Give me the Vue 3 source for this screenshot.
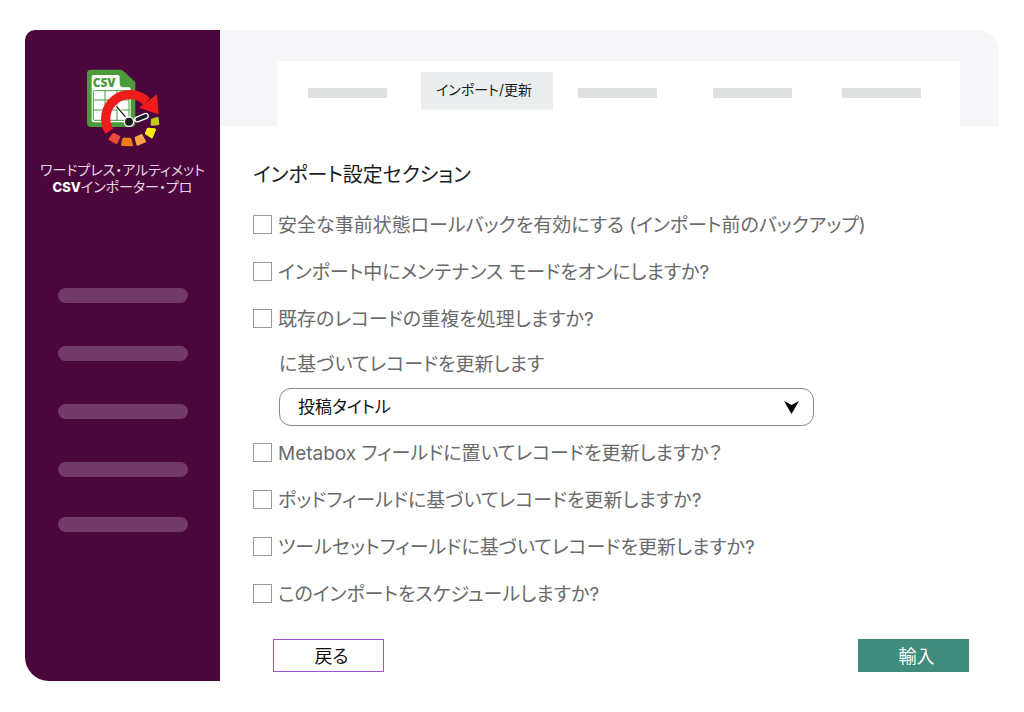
<script setup>
import { ref } from 'vue'

const before = ref([
  { id: 'rollback', label: '安全な事前状態ロールバックを有効にする (インポート前のバックアップ)', checked: false },
  { id: 'maintenance', label: 'インポート中にメンテナンス モードをオンにしますか?', checked: false },
  { id: 'duplicates', label: '既存のレコードの重複を処理しますか?', checked: false }
])

const after = ref([
  { id: 'metabox', label: 'Metabox フィールドに置いてレコードを更新しますか？', checked: false },
  { id: 'pods', label: 'ポッドフィールドに基づいてレコードを更新しますか?', checked: false },
  { id: 'toolset', label: 'ツールセットフィールドに基づいてレコードを更新しますか?', checked: false },
  { id: 'schedule', label: 'このインポートをスケジュールしますか?', checked: false }
])

const matchBy = ref('title')
</script>

<template>
  <div class="page">
    <aside class="sidebar">
      <svg class="logo" viewBox="-4 0 240 255" aria-hidden="true">
        <path d="M20 11H113L153 48V172Q153 183 142 183H20Q8 183 8 171V23Q8 11 20 11Z" fill="#4b9b3b" />
        <path d="M28 27H100Q106 27 106 33V52Q106 64 118 64H134Q139 64 139 70V163Q139 169 133 169H28Q22 169 22 163V33Q22 27 28 27Z" fill="#fff" />
        <text x="25" y="62" class="logo-text">CSV</text>
        <g fill="none" stroke="#4b9b3b" stroke-width="3">
          <rect x="27" y="74" width="107" height="89" rx="3" />
          <path d="M27 102H134M27 132H134M62 74V163M98 74V163" />
        </g>
        <path d="M75 196A72 72 0 0 1 187 107" fill="none" stroke="#ef1c1c" stroke-width="28" />
        <path d="M218 85L223 145L163 125L183 112Z" fill="#ef1c1c" />
        <g stroke-linejoin="round" stroke-width="8">
          <path d="M88 205L104 213L96 230L77 219Z" fill="#ee4938" stroke="#ee4938" />
          <path d="M118 219H137L142 237L114 236Z" fill="#f07c12" stroke="#f07c12" />
          <path d="M155 216L171 208L181 226L160 235Z" fill="#f9a24a" stroke="#f9a24a" />
          <path d="M191 189L211 191L202 213L186 202Z" fill="#f8ec09" stroke="#f8ec09" />
          <path d="M204 161L219 157L221 174L203 175Z" fill="#bccb17" stroke="#bccb17" />
        </g>
        <g stroke-linecap="round">
          <path d="M97 122L122 151" stroke="#fff" stroke-width="9" />
          <path d="M97 122L122 151" stroke="#1c1a1c" stroke-width="4" />
          <path d="M134 167L158 159" stroke="#fff" stroke-width="5" />
          <path d="M159 160L184 150" stroke="#fff" stroke-width="19" />
          <path d="M159 160L184 150" stroke="#1c1a1c" stroke-width="11" />
        </g>
        <circle cx="134" cy="167" r="14" fill="#1c1a1c" stroke="#fff" stroke-width="4" />
      </svg>
      <p class="brand">ワードプレス・アルティメット<br /><b>CSV</b>インポーター・プロ</p>
      <div class="menu">
        <span v-for="n in 5" :key="n" class="menu-bar"></span>
      </div>
    </aside>

    <div class="content">
      <header class="header">
        <nav class="tabs">
          <span class="tab-bar"></span>
          <a class="tab" href="#" aria-current="page">インポート/更新</a>
          <span class="tab-bar"></span>
          <span class="tab-bar"></span>
          <span class="tab-bar"></span>
        </nav>
      </header>

      <form class="settings" @submit.prevent>
        <h1 class="title">インポート設定セクション</h1>

        <div v-for="o in before" :key="o.id" class="option">
          <input :id="o.id" v-model="o.checked" class="check" type="checkbox" />
          <label class="option-label" :for="o.id">{{ o.label }}</label>
        </div>

        <div class="match">
          <label class="match-label" for="match">に基づいてレコードを更新します</label>
          <div class="select-wrap">
            <select id="match" v-model="matchBy" class="select">
              <option value="title">投稿タイトル</option>
            </select>
            <svg class="arrow" viewBox="0 0 15 13" aria-hidden="true">
              <path d="M0 0L7.5 4L15 0L7.5 13Z" fill="#000" />
            </svg>
          </div>
        </div>

        <div v-for="o in after" :key="o.id" class="option">
          <input :id="o.id" v-model="o.checked" class="check" type="checkbox" />
          <label class="option-label" :for="o.id">{{ o.label }}</label>
        </div>

        <div class="actions">
          <button class="btn back" type="button">戻る</button>
          <button class="btn submit" type="submit">輸入</button>
        </div>
      </form>
    </div>
  </div>
</template>

<style>
body {
  background: #fff;
}
</style>

<style scoped>
.page {
  display: grid;
  grid-template-columns: 195px 1fr;
  padding: 30px 25px;
  font-family: Inter, "Noto Sans CJK JP", sans-serif;
  font-feature-settings: "palt";
  font-size: 19px;
  color: #6a6a6a;
}

.page * {
  box-sizing: border-box;
}

.sidebar {
  display: flex;
  flex-direction: column;
  align-items: center;
  padding-top: 36px;
  background: #4b063c;
  border-radius: 10px 0 0 24px;
}

.logo {
  width: 80px;
  height: 85px;
}

.logo-text {
  font: 800 36px "Open Sans", "Noto Sans", sans-serif;
  fill: #4b9b3b;
}

.brand {
  margin: 10px 0 0;
  font-size: 14px;
  line-height: 17px;
  text-align: center;
  white-space: nowrap;
  color: #e6d5e2;
}

.brand b {
  font-size: 13px;
  font-weight: 800;
  color: #fff;
}

.menu {
  display: grid;
  gap: 43px;
  margin-top: 92px;
}

.menu-bar {
  width: 130px;
  height: 15px;
  border-radius: 8px;
  background: #703b66;
}

.menu-bar:last-child {
  margin-top: -3px;
}

.header {
  padding: 31px 39px 0 57px;
  background: #f6f6f9;
  border-radius: 0 22px 0 0;
}

.tabs {
  display: grid;
  grid-template-columns: 141fr 138fr 123fr 147fr 111fr;
  align-items: center;
  justify-items: center;
  height: 65px;
  padding: 0 23px 2px 0;
  background: #fff;
}

.tab-bar {
  width: 79px;
  height: 10px;
  background: #dfe1e1;
}

.tab {
  width: 132px;
  height: 38px;
  margin-bottom: 4px;
  padding-right: 6px;
  font-size: 14px;
  line-height: 36px;
  text-align: center;
  text-decoration: none;
  white-space: nowrap;
  color: #1c1c1c;
  background: #ebeeef;
}

.settings {
  padding: 34px 30px 9px 33px;
}

.title {
  margin: 0 0 11px;
  font-size: 20px;
  font-weight: 400;
  line-height: 30px;
  color: #1c1c1c;
}

.option {
  display: flex;
  align-items: center;
  gap: 6px;
  height: 47px;
}

.option-label {
  padding-bottom: 2px;
}

.check {
  appearance: none;
  flex: none;
  width: 19px;
  height: 19px;
  margin: 0;
  border: 1px solid #999;
  background: #fff;
}

.check:checked {
  background: #3f8c7c;
}

.match {
  max-width: 561px;
  margin-bottom: 3px;
  padding-left: 26px;
}

.match-label {
  display: block;
  line-height: 46px;
}

.select-wrap {
  position: relative;
}

.select {
  appearance: none;
  display: block;
  width: 100%;
  height: 38px;
  padding: 0 48px 0 18px;
  border: 1px solid #888;
  border-radius: 12px;
  background: #fff;
  font: inherit;
  font-size: 17px;
  font-feature-settings: inherit;
  color: #111;
}

.arrow {
  position: absolute;
  top: 13px;
  right: 15px;
  width: 15px;
  height: 13px;
  pointer-events: none;
}

.actions {
  display: flex;
  justify-content: space-between;
  margin-top: 22px;
  padding-left: 20px;
}

.btn {
  width: 111px;
  height: 33px;
  padding: 0 0 2px 6px;
  font: inherit;
  font-size: 18px;
  font-feature-settings: inherit;
}

.back {
  border: 1px solid #9a55d6;
  background: #fff;
  color: #111;
}

.submit {
  border: 0;
  background: #3f8c7c;
  color: #fff;
}
</style>
